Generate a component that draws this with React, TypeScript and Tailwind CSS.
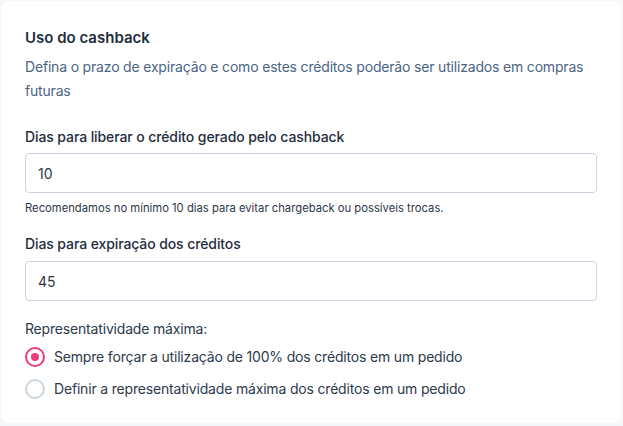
import React from "react";

function Radio({ checked, label }: { checked: boolean; label: string }) {
  return (
    <label className="flex items-center gap-[9px] h-5">
      <span
        className={
          checked
            ? "flex h-5 w-5 items-center justify-center rounded-full border-2 border-[#f2387c] bg-white"
            : "flex h-5 w-5 items-center justify-center rounded-full border-2 border-[#cbd5e1] bg-white"
        }
      >
        {checked && <span className="h-2 w-2 rounded-full bg-[#f2387c]" />}
      </span>
      <span className="text-[14px] leading-5 tracking-[-0.18px] text-[#2d3a4b]">{label}</span>
    </label>
  );
}

export default function App() {
  return (
    <div
      className="h-[426px] w-[623px] bg-[#f6f7f9] pl-px pt-px"
      style={{ fontFamily: "Inter, 'Noto Sans', sans-serif" }}
    >
      <div className="h-[422px] w-[620px] rounded-lg bg-white px-6 pt-[27px]">
        <h2 className="text-[15px] font-semibold leading-5 text-[#1f2d3d]">Uso do cashback</h2>
        <p className="mt-[7px] text-[14px] leading-6 tracking-[-0.18px] text-[#4a6584]">
          Defina o prazo de expiração e como estes créditos poderão ser utilizados em compras futuras
        </p>

        <div className="mt-6 text-[14px] font-medium leading-5 tracking-[-0.1px] text-[#1f2d3d]">
          Dias para liberar o crédito gerado pelo cashback
        </div>
        <div className="mt-[6px] flex h-[40px] items-center rounded border border-[#cbd5e1] px-3 text-[14px] text-[#2d3748]">
          10
        </div>
        <div className="mt-[7px] text-[11.25px] leading-4 text-[#2d3748]">
          Recomendamos no mínimo 10 dias para evitar chargeback ou possíveis trocas.
        </div>

        <div className="mt-[18px] text-[14px] font-medium leading-5 tracking-[-0.1px] text-[#1f2d3d]">
          Dias para expiração dos créditos
        </div>
        <div className="mt-[7px] flex h-[40px] items-center rounded border border-[#cbd5e1] px-3 text-[14px] text-[#2d3748]">
          45
        </div>

        <div className="mt-[18px] text-[14px] leading-5 tracking-[-0.18px] text-[#2d3a4b]">Representatividade máxima:</div>
        <div className="mt-2 flex flex-col gap-3">
          <Radio checked label="Sempre forçar a utilização de 100% dos créditos em um pedido" />
          <Radio checked={false} label="Definir a representatividade máxima dos créditos em um pedido" />
        </div>
      </div>
    </div>
  );
}
